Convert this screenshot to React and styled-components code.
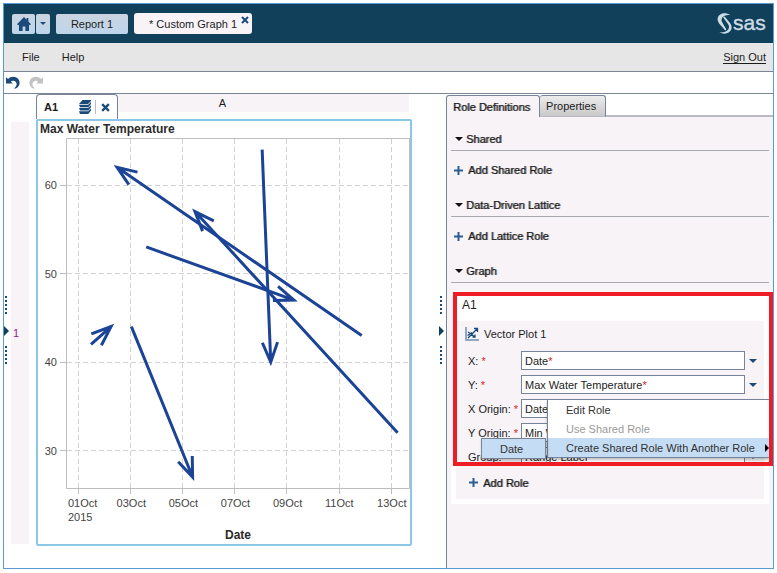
import React from "react";
import styled, { createGlobalStyle } from "styled-components";

const navy = "#10405a";
const iconBlue = "#1a4a7a";
const panelBg = "#f7f3f7";
const line = "#76839a";

const GlobalStyle = createGlobalStyle`
  * {
    box-sizing: border-box;
  }
  body {
    margin: 0;
    background: #fff;
    color: #1c1c1c;
    font-family: "Liberation Sans", Arial, sans-serif;
    font-size: 11px;
    line-height: 14px;
  }
  button,
  input {
    margin: 0;
    padding: 0;
    border: 0;
    background: none;
    color: inherit;
    font: inherit;
  }
  svg {
    display: block;
    flex: none;
  }
`;

const Frame = styled.div`
  display: flex;
  flex-direction: column;
  min-height: calc(100vh - 7px);
  margin: 3px 3px 4px;
  border: 1px solid #5b9bd5;
`;

/* ---------- top bars ---------- */

const Banner = styled.header`
  display: flex;
  align-items: center;
  height: 39px;
  padding: 0 4px 0 8px;
  background: ${navy};
`;

const HomeGroup = styled.div`
  display: flex;
  gap: 1px;
  margin-right: 6px;
`;

const BannerButton = styled.button`
  display: flex;
  align-items: center;
  justify-content: center;
  width: ${(props) => props.$width}px;
  height: 20px;
  border-radius: 2px;
  background: linear-gradient(#cbd5e0, #bdd5ea);
`;

const DocTab = styled.div`
  display: flex;
  align-items: center;
  gap: 4px;
  height: 21px;
  padding: 0 3px 0 15px;
  border-radius: 3px;
  background: ${panelBg};

  button {
    align-self: flex-start;
    margin-top: 3px;
  }
`;

const Logo = styled.svg`
  margin-left: auto;
`;

const MenuBar = styled.nav`
  display: flex;
  align-items: center;
  gap: 22px;
  height: 29px;
  padding: 0 7px 0 18px;
  border-bottom: 1px solid #7c8594;
  background: #e6e6e6;

  a {
    margin-left: auto;
    border-bottom: 1px solid #1c1c1c;
    color: inherit;
    line-height: 12px;
    text-decoration: none;
  }
`;

const Toolbar = styled.div`
  display: flex;
  align-items: center;
  gap: 9px;
  height: 22px;
  padding-left: 2px;
  border-bottom: 1px solid #7c8594;
`;

const Main = styled.main`
  display: flex;
  flex: 1;
`;

/* ---------- graph editor ---------- */

const Editor = styled.section`
  display: grid;
  flex: 1;
  grid-template-columns: 7px 18px minmax(0, 1fr) 8px;
  grid-template-rows: 25px 1fr;
  padding-bottom: 22px;
`;

const Splitter = styled.div`
  display: flex;
  grid-row: 1 / 3;
  grid-column: ${(props) => props.$column};
  align-items: center;
  justify-content: ${(props) => (props.$column === 1 ? "start" : "center")};
  margin-bottom: -22px;
`;

const RowStrip = styled.div`
  display: flex;
  grid-row: 2;
  grid-column: 2;
  align-items: center;
  margin: 3px 0 2px;
  padding-left: 2px;
  background: ${panelBg};
  color: #8b2590;
`;

const ColumnStrip = styled.div`
  grid-row: 1;
  grid-column: 3;
  height: 18px;
  margin: 0 29px 0 7px;
  padding-top: 2px;
  background: ${panelBg};
  text-align: center;
`;

const CellTab = styled.div`
  display: flex;
  grid-row: 1;
  grid-column: 3;
  justify-self: start;
  align-items: center;
  width: 82px;
  margin-left: 7px;
  padding: 0 7px;
  border: 1px solid ${line};
  border-bottom: 0;
  border-radius: 4px 4px 0 0;
  background: #fff;
  font-weight: bold;

  button:first-of-type {
    margin-left: auto;
    padding-right: 4px;
    border-right: 1px solid #b4bfcc;
  }
  button:last-of-type {
    margin-left: 5px;
  }
`;

const PlotCell = styled.div`
  grid-row: 2;
  grid-column: 3;
  margin: 0 26px 0 7px;
  border: 2px solid #8cc8e6;
  border-radius: 2px;
`;

const Chart = styled.svg`
  width: 100%;

  text {
    fill: #444;
    font-size: 11px;
  }
  .title {
    fill: #2b2b2b;
    font-size: 12px;
    font-weight: bold;
  }
  .grid {
    stroke: #d2d2d2;
    stroke-dasharray: 5 3;
  }
  .axis {
    fill: none;
    stroke: #bdbdbd;
  }
  .vector {
    fill: none;
    stroke: #1b4396;
    stroke-width: 3;
  }
`;

/* ---------- role panel ---------- */

const Panel = styled.aside`
  display: flex;
  flex: 0 0 327px;
  flex-direction: column;
`;

const TabList = styled.div`
  display: flex;
  height: 23px;
  padding-top: 1px;

  &::after {
    flex: 1;
    border-bottom: 2px solid #b9bac4;
    content: "";
  }
`;

const PanelTab = styled.button`
  padding: 0 9px 0 6px;
  border: 1px solid ${line};
  border-left-width: ${(props) => (props.$active ? 1 : 0)}px;
  border-bottom: ${(props) => (props.$active ? "0" : "1px solid #b9bac4")};
  border-radius: 3px 3px 0 0;
  background: ${(props) =>
    props.$active ? panelBg : "linear-gradient(#ececec, #c9c9c9)"};
  text-shadow: ${(props) => (props.$active ? "1px 0 #1c1c1c99" : "none")};
`;

const PanelBody = styled.div`
  flex: 1;
  padding: 11px 4px 20px;
  border-left: 1px solid ${line};
  background: ${panelBg};
`;

const SectionTitle = styled.h2`
  display: flex;
  align-items: center;
  gap: 3px;
  height: 23px;
  margin: 0;
  padding-left: 4px;
  border-bottom: 1px solid #a9a9b0;
  font-size: 11px;
  font-weight: normal;
  text-shadow: 1px 0 #1c1c1c99;
`;

const AddButton = styled.button`
  display: flex;
  align-items: center;
  gap: 5px;
  height: ${(props) => (props.$compact ? 28 : 43)}px;
  padding: 0 ${(props) => (props.$compact ? 1 : 3)}px 5px;
  text-shadow: 1px 0 #1c1c1c99;
`;

const Card = styled.div`
  position: relative;
  margin-top: 9px;
  padding: 0 5px 5px;
  background: #fff;
`;

const CardTitle = styled.div`
  height: 29px;
  padding: 6px 6px 0;
  font-size: 12px;
`;

const CardBody = styled.div`
  padding: 0 3px 0 12px;
  background: ${panelBg};
`;

const PlotName = styled.div`
  display: flex;
  align-items: center;
  gap: 5px;
  height: 30px;
  margin-left: -3px;
  padding-bottom: 5px;
`;

const FieldRow = styled.div`
  display: grid;
  grid-template-columns: 53px 1fr 16px;
  align-items: center;
  height: 19px;
  margin-bottom: 5px;
`;

const Required = styled.span`
  color: #d22;
`;

const Field = styled.div`
  display: flex;
  align-items: center;
  height: 19px;
  padding-left: 3px;
  border: 1px solid ${line};
  background: #fff;

  input {
    min-width: 0;
    field-sizing: content;
  }
`;

const DropButton = styled.button`
  display: flex;
  align-items: center;
  justify-content: center;
  height: 19px;
`;

const Menu = styled.div`
  position: absolute;
  top: 107px;
  right: 0;
  left: 96px;
  border: 1px solid ${line};
  border-right: 0;
  background: #fff;
  box-shadow: 0 2px 3px #0004;
`;

const MenuItem = styled.button`
  display: flex;
  align-items: center;
  justify-content: space-between;
  width: 100%;
  height: 19px;
  padding-left: 18px;
  background: ${(props) => (props.$active ? "#c4dcf4" : "none")};
  color: ${(props) => (props.disabled ? "#999" : "#333")};
  white-space: nowrap;
`;

const SubMenu = styled.div`
  position: absolute;
  right: calc(100% + 2px);
  bottom: -2px;
  width: 65px;
  border: 1px solid ${line};
  box-shadow: 1px 2px 3px #0004;
`;

const Highlight = styled.div`
  position: absolute;
  top: 0;
  right: -4px;
  left: 2px;
  height: 174px;
  border: 4px solid #ee1c24;
  box-shadow: -2px 0 ${panelBg};
  pointer-events: none;
`;

/* ---------- icons ---------- */

const HomeIcon = () => (
  <svg width="14" height="14" viewBox="0 0 14 14" fill={iconBlue}>
    <path d="M7 0 0 7.2l1.2 1L2 7.4V14h3.6V9.5h2.8V14H12V7.4l.8.8 1.2-1-2.6-2.7V1H9.6v1.7z" />
  </svg>
);

const Caret = ({ size = 8, color = iconBlue }) => (
  <svg width={size} height={size / 2} viewBox="0 0 8 4" fill={color}>
    <path d="M0 0h8L4 4z" />
  </svg>
);

const CloseIcon = ({ size }) => (
  <svg width={size} height={size} viewBox="0 0 8 8" stroke={iconBlue} strokeWidth="2">
    <path d="m1 1 6 6M7 1 1 7" />
  </svg>
);

const UndoIcon = ({ color, flip }) => (
  <svg width="14" height="13" viewBox="0 0 14 13" fill={color}>
    <path
      transform={flip ? "matrix(-1 0 0 1 14 0)" : undefined}
      d="M0 1.2 2.1 3C4.2.7 7.6.3 10.4 1.6 14.8 4 14.7 10.2 9.8 12.6L8 12.5C11.5 9.7 11.3 6.4 8.8 5.2 7.3 4.5 5.9 4.8 4.8 5.6L6.8 7.6H0z"
    />
  </svg>
);

const LayersIcon = () => (
  <svg width="12" height="14" viewBox="0 0 12 14" fill={iconBlue}>
    <path d="M3.5 0H12v1L9 4H0z" />
    <path d="M0 4.7h9.2L12 2v2L9.3 7.3H1zM0 8h9.2L12 5.2v2l-2.7 3.4H1zM0 11.300h9.200L12 8.500v2L9.300 14H1z" />
  </svg>
);

const PlusIcon = () => (
  <svg width="9" height="9" viewBox="0 0 9 9" fill="#2b5f93">
    <path d="M3.5 0h2v3.500H9v2H5.500V9h-2V5.500H0v-2h3.500z" />
  </svg>
);

const VectorIcon = () => (
  <svg width="14" height="14" viewBox="0 0 14 14" fill="none" stroke={iconBlue}>
    <path d="M1 0v13h13" stroke="#6f93b5" strokeWidth="1.5" />
    <path
      d="m3 11 9.500-9.500M9 1.500h3.500V5M3 5l7 5M7.500 10H10V7.500M2.500 8.500 7 5.500"
      strokeWidth="1.3"
    />
  </svg>
);

const SplitHandle = () => (
  <svg width="6" height="72" viewBox="0 0 6 72">
    <path d="M2 1v20M2 51v20" stroke={iconBlue} strokeWidth="2" strokeDasharray="2 2" />
    <path d="M0 31v10l5-5z" fill={navy} />
  </svg>
);

const SasLogo = () => (
  <Logo width="52" height="30" viewBox="0 -3 52 30" role="img" aria-label="SAS">
    <g fill="#cddbe3">
      <path d="M13.5 3.2C7-1 .6 2.200.6 7.300c0 2.200 1 3.600 2.600 5.500l4.600 5.200c.8.800 1.900.200 1.300-.900L5.600 11C2.800 7 5.800 2.300 13.500 3.200z" />
      <path d="M2.200 20.600c7.500 3 12.800-.800 12.400-5.800-.1-1.800-.9-3-2.400-4.800L8 5c-1-1-2.200-.200-1.400 1.100l4.200 5.700c3.200 4.200.1 9.200-8.600 8.800z" />
      <text x="16" y="18" fontSize="21" stroke="#cddbe3" strokeWidth=".4">
        sas
      </text>
    </g>
  </Logo>
);

/* ---------- chart ---------- */

const vectors = [
  { x0: 11.87, y0: 43, x1: 2.48, y1: 62 },
  { x0: 3.6, y0: 53, x1: 9.27, y1: 47 },
  { x0: 8.05, y0: 64, x1: 8.38, y1: 40 },
  { x0: 13.25, y0: 32, x1: 5.47, y1: 57 },
  { x0: 3.03, y0: 44, x1: 5.38, y1: 27 },
  { x0: 1.48, y0: 42, x1: 2.25, y1: 44 },
];

const days = [1, 3, 5, 7, 9, 11, 13];
const temps = [60, 50, 40, 30];

const sx = (day) => 40.5 + (day - 1) * 26.05;
const sy = (temp) => 64 + (60 - temp) * 8.85;

const arrowPath = ({ x0, y0, x1, y1 }) => {
  const tipX = sx(x1);
  const tipY = sy(y1);
  const angle = Math.atan2(tipY - sy(y0), tipX - sx(x0));
  const barb = (turn) =>
    `${tipX - 21 * Math.cos(angle + turn)} ${tipY - 21 * Math.sin(angle + turn)}`;
  return `M${sx(x0)} ${sy(y0)}L${tipX} ${tipY}M${barb(0.37)}L${tipX} ${tipY}L${barb(-0.37)}`;
};

const VectorPlot = () => (
  <Chart viewBox="0 0 372 423">
    <text className="title" x="2" y="12">
      Max Water Temperature
    </text>
    {temps.map((temp) => (
      <g key={temp}>
        <path className="grid" d={`M29 ${Math.floor(sy(temp)) + 0.5}H371`} />
        <path className="axis" d={`M22 ${Math.floor(sy(temp)) + 0.5}h7`} />
        <text x="19" y={sy(temp) + 4} textAnchor="end">
          {temp}
        </text>
      </g>
    ))}
    {days.map((day) => (
      <g key={day}>
        <path className="grid" d={`M${Math.floor(sx(day)) + 0.5} 18V367`} />
        <path className="axis" d={`M${Math.floor(sx(day)) + 0.5} 368v5`} />
        <text x={day === 1 ? 30 : sx(day) - 14} y="386">
          {String(day).padStart(2, "0")}Oct
        </text>
      </g>
    ))}
    <text x="30" y="400">
      2015
    </text>
    <path className="axis" d="M28.5 17.5h343v350h-343z" />
    {vectors.map((v) => (
      <path key={v.x0} className="vector" d={arrowPath(v)} />
    ))}
    <text className="title" x="200" y="418" textAnchor="middle">
      Date
    </text>
  </Chart>
);

/* ---------- role fields ---------- */

const fields = [
  { id: "x", label: "X:", value: "Date", required: true },
  { id: "y", label: "Y:", value: "Max Water Temperature", required: true },
  { id: "x-origin", label: "X Origin:", value: "Date", required: true },
  { id: "y-origin", label: "Y Origin:", value: "Min Water Temperature", required: true },
  { id: "group", label: "Group:", value: "Range Label", required: false },
];

const RoleField = ({ id, label, value, required }) => (
  <FieldRow>
    <label htmlFor={id}>
      {label} {required && <Required>*</Required>}
    </label>
    <Field>
      <input id={id} type="text" defaultValue={value} />
      {required && <Required>*</Required>}
    </Field>
    <DropButton type="button" aria-label={`${label} options`}>
      <Caret />
    </DropButton>
  </FieldRow>
);

const Section = ({ title, action }) => (
  <section>
    <SectionTitle>
      <Caret color="#111" />
      {title}
    </SectionTitle>
    {action && (
      <AddButton type="button">
        <PlusIcon />
        {action}
      </AddButton>
    )}
  </section>
);

const RoleMenu = () => (
  <Menu role="menu">
    <MenuItem role="menuitem">Edit Role</MenuItem>
    <MenuItem role="menuitem" disabled>
      Use Shared Role
    </MenuItem>
    <MenuItem role="menuitem" $active>
      Create Shared Role With Another Role
      <svg width="4" height="8" viewBox="0 0 4 8">
        <path d="M0 0v8l4-4z" />
      </svg>
    </MenuItem>
    <SubMenu role="menu">
      <MenuItem role="menuitem" $active>
        Date
      </MenuItem>
    </SubMenu>
  </Menu>
);

export default function App() {
  return (
    <>
      <GlobalStyle />
      <Frame>
        <Banner>
          <HomeGroup>
            <BannerButton $width={23} aria-label="Home">
              <HomeIcon />
            </BannerButton>
            <BannerButton $width={14} aria-label="Recent">
              <Caret size={6} />
            </BannerButton>
          </HomeGroup>
          <HomeGroup>
            <BannerButton $width={72}>Report 1</BannerButton>
          </HomeGroup>
          <DocTab>
            * Custom Graph 1
            <button type="button" aria-label="Close Custom Graph 1">
              <CloseIcon size={8} />
            </button>
          </DocTab>
          <SasLogo />
        </Banner>
        <MenuBar>
          <button type="button">File</button>
          <button type="button">Help</button>
          <a href="#sign-out">Sign Out</a>
        </MenuBar>
        <Toolbar>
          <button type="button" aria-label="Undo">
            <UndoIcon color={iconBlue} />
          </button>
          <button type="button" aria-label="Redo">
            <UndoIcon color="#c2c2c2" flip />
          </button>
        </Toolbar>
        <Main>
          <Editor>
            <Splitter $column={1}>
              <SplitHandle />
            </Splitter>
            <RowStrip>1</RowStrip>
            <ColumnStrip>A</ColumnStrip>
            <CellTab>
              A1
              <button type="button" aria-label="Layers">
                <LayersIcon />
              </button>
              <button type="button" aria-label="Close A1">
                <CloseIcon size={9} />
              </button>
            </CellTab>
            <PlotCell>
              <VectorPlot />
            </PlotCell>
            <Splitter $column={4}>
              <SplitHandle />
            </Splitter>
          </Editor>
          <Panel>
            <TabList role="tablist">
              <PanelTab role="tab" aria-selected="true" $active>
                Role Definitions
              </PanelTab>
              <PanelTab role="tab">Properties</PanelTab>
            </TabList>
            <PanelBody>
              <Section title="Shared" action="Add Shared Role" />
              <Section title="Data-Driven Lattice" action="Add Lattice Role" />
              <Section title="Graph" />
              <Card>
                <CardTitle>A1</CardTitle>
                <CardBody>
                  <PlotName>
                    <VectorIcon />
                    Vector Plot 1
                  </PlotName>
                  {fields.map((field) => (
                    <RoleField key={field.id} {...field} />
                  ))}
                  <AddButton type="button" $compact>
                    <PlusIcon />
                    Add Role
                  </AddButton>
                </CardBody>
                <RoleMenu />
                <Highlight />
              </Card>
            </PanelBody>
          </Panel>
        </Main>
      </Frame>
    </>
  );
}
